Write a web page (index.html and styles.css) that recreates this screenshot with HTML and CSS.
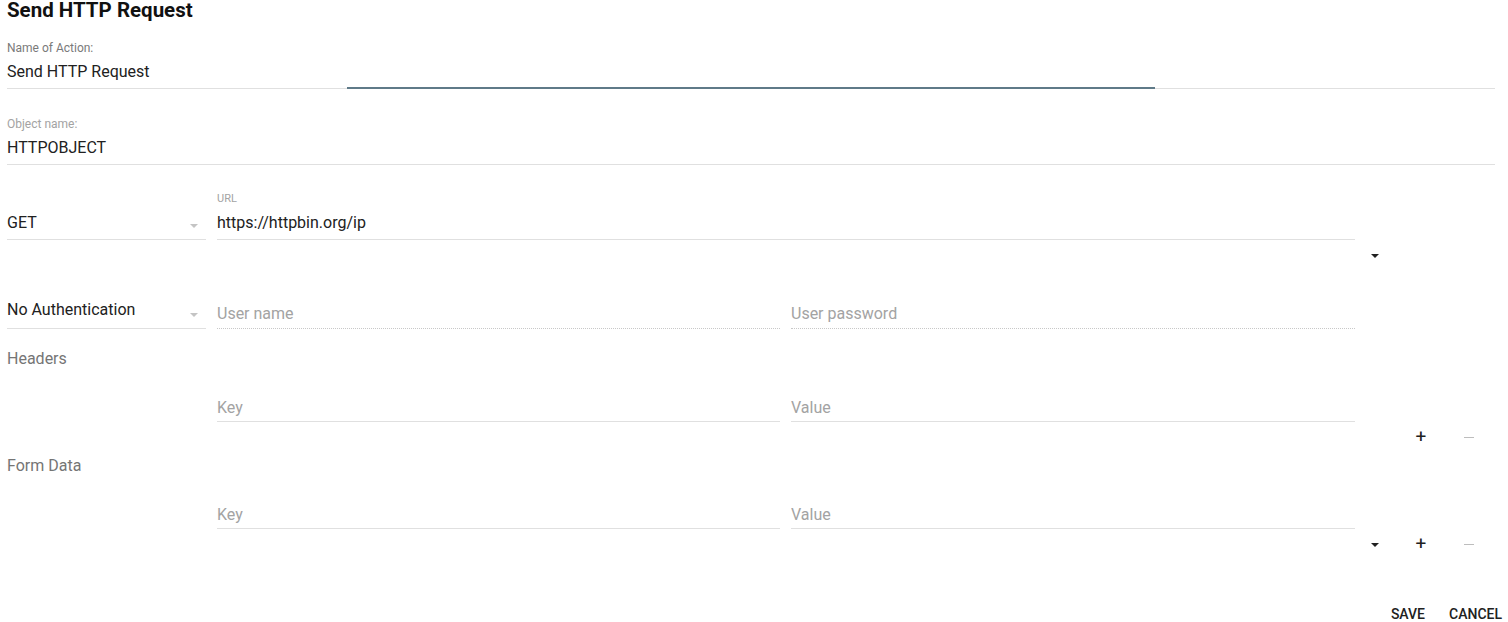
FILE: index.html
```
<!DOCTYPE html>
<html lang="en">
<head>
  <meta charset="UTF-8" />
  <title>Send HTTP Request</title>
  <link rel="stylesheet" href="styles.css">
</head>
<body>

<div class="page">
  <h1 class="title">Send HTTP Request</h1>

  <!-- action name -->
  <div class="field field-focus row-name">
    <label class="field-label dark">Name of Action:</label>
    <input class="field-input" type="text" value="Send HTTP Request">
  </div>

  <div class="field row-object">
    <label class="field-label">Object name:</label>
    <input class="field-input" type="text" value="HTTPOBJECT">
  </div>

  <!-- method + url -->
  <div class="row row-url">
    <div class="field col-select">
      <div class="field-label"></div>
      <div class="select">GET<span class="arrow"></span></div>
    </div>
    <div class="field col-wide">
      <label class="field-label small">URL</label>
      <input class="field-input" type="text" value="https://httpbin.org/ip">
    </div>
    <div class="actions">
      <span class="slot"><span class="caret"></span></span>
    </div>
  </div>

  <!-- auth -->
  <div class="row row-auth">
    <div class="field col-select">
      <div class="field-label"></div>
      <div class="select select-auth">No Authentication<span class="arrow"></span></div>
    </div>
    <div class="field col-half">
      <div class="field-label"></div>
      <input class="field-input ph disabled" type="text" placeholder="User name" disabled>
    </div>
    <div class="field col-half">
      <div class="field-label"></div>
      <input class="field-input ph disabled" type="password" placeholder="User password" disabled>
    </div>
  </div>

  <div class="section section-headers">Headers</div>
  <div class="row row-kv">
    <div class="col-select"></div>
    <div class="field col-half">
      <div class="field-label"></div>
      <input class="field-input ph kv" type="text" placeholder="Key">
    </div>
    <div class="field col-half">
      <div class="field-label"></div>
      <input class="field-input ph kv" type="text" placeholder="Value">
    </div>
    <div class="actions">
      <span class="slot"></span>
      <span class="slot plus-slot"><span class="plus">+</span></span>
      <span class="slot minus-slot"><span class="minus"></span></span>
    </div>
  </div>

  <div class="section section-form">Form Data</div>
  <div class="row row-kv">
    <div class="col-select"></div>
    <div class="field col-half">
      <div class="field-label"></div>
      <input class="field-input ph kv" type="text" placeholder="Key">
    </div>
    <div class="field col-half">
      <div class="field-label"></div>
      <input class="field-input ph kv" type="text" placeholder="Value">
    </div>
    <div class="actions">
      <span class="slot"><span class="caret"></span></span>
      <span class="slot plus-slot"><span class="plus">+</span></span>
      <span class="slot minus-slot"><span class="minus"></span></span>
    </div>
  </div>

  <div class="footer">
    <button class="btn">Save</button>
    <button class="btn">Cancel</button>
  </div>
</div>

</body>
</html>
```

FILE: styles.css
```
* {
  margin: 0;
  padding: 0;
  box-sizing: border-box;
}

body {
  font-family: Roboto, "Liberation Sans", sans-serif;
  background: #fff;
  color: #212121;
}

.page {
  padding: 0 13px 0 7px;
}

.title {
  font-size: 20.5px;
  font-weight: 700;
  line-height: 22px;
  color: #111;
  margin-top: -1px;
}

.field {
  position: relative;
  display: flex;
  flex-direction: column;
}

.field-label {
  display: block;
  height: 14px;
  line-height: 14px;
  font-size: 12px;
  color: #a3a3a3;
}

.field-label.dark {
  color: #7a7a7a;
}

.field-label.small {
  font-size: 11px;
}

.field-input {
  display: block;
  width: 100%;
  height: 34px;
  padding: 7px 0 7px;
  border: 0;
  border-bottom: 1px solid #e0e0e0;
  outline: none;
  font-family: inherit;
  font-size: 16px;
  line-height: 19px;
  color: #212121;
  background: transparent;
}

.field-input.ph {
  padding: 9px 0 5px;
}

.field-input.kv {
  height: 33px;
  padding: 9px 0 4px;
}

.field-input::placeholder {
  color: #a3a3a3;
  opacity: 1;
}

.field-input.disabled {
  border-bottom: 1px dotted #c8c8c8;
}

/* half-grown focus bar under the first input */
.field-focus::after {
  content: "";
  position: absolute;
  left: 50%;
  bottom: 0;
  width: 808px;
  height: 2px;
  margin-left: -404px;
  background: #5f7a88;
}

.row-name {
  margin-top: 20px;
}

.row-object {
  margin-top: 28px;
}

.row {
  display: flex;
  align-items: flex-start;
}

.row-url {
  margin-top: 27px;
}

.row-auth {
  margin-top: 13px;
}

.col-select {
  width: 199px;
  flex: none;
  margin-right: 11px;
}

.col-wide {
  width: 1138px;
  flex: none;
}

.col-half {
  width: 563px;
  flex: none;
}

.col-half + .col-half {
  width: 564px;
  margin-left: 11px;
}

.select {
  position: relative;
  height: 34px;
  padding: 7px 0 7px;
  font-size: 16px;
  line-height: 19px;
  color: #212121;
  border-bottom: 1px solid #e0e0e0;
}

.select-auth {
  padding: 5px 0 9px;
}

.arrow {
  position: absolute;
  right: 8px;
  top: 18px;
  width: 0;
  height: 0;
  border-left: 4px solid transparent;
  border-right: 4px solid transparent;
  border-top: 4px solid #c4c4c4;
}

.actions {
  display: flex;
  padding-top: 51px;
  margin-left: 8px;
  height: 76px;
}

.row-kv .actions {
  padding-top: 50px;
}

.slot {
  width: 24px;
  height: 24px;
  display: flex;
  align-items: center;
  justify-content: center;
  flex: none;
}

.plus-slot {
  margin-left: 22px;
}

.minus-slot {
  margin-left: 24px;
}

.caret {
  width: 0;
  height: 0;
  border-left: 4px solid transparent;
  border-right: 4px solid transparent;
  border-top: 4px solid #212121;
  margin-top: 1px;
}

.plus {
  font-size: 19px;
  line-height: 24px;
  color: #212121;
  font-weight: 400;
}

.minus {
  width: 10px;
  height: 1px;
  background: #bdbdbd;
}

.section {
  font-size: 16px;
  line-height: 19px;
  color: #757575;
}

.section-headers {
  margin-top: 20px;
}

.section-form {
  margin-top: 5px;
}

.row-kv {
  margin-top: 7px;
}

.footer {
  display: flex;
  justify-content: flex-end;
  gap: 24px;
  margin-top: 48px;
  margin-right: -7px;
}

.btn {
  border: none;
  background: none;
  font-family: inherit;
  font-size: 14px;
  font-weight: 500;
  line-height: 16px;
  text-transform: uppercase;
  color: #212121;
  cursor: pointer;
}
```
